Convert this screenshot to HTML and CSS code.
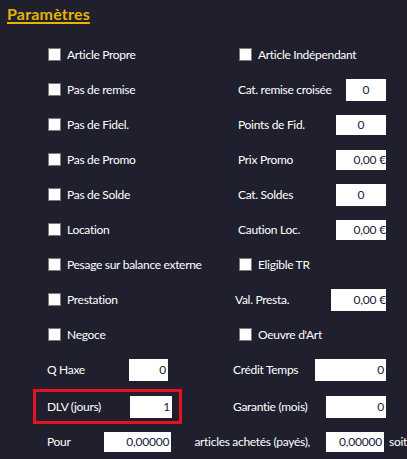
FILE: index.html
```html
<!DOCTYPE html>
<html lang="fr">
<head>
<meta charset="utf-8">
<title>Paramètres</title>
<link rel="stylesheet" href="styles.css">
</head>
<body>
<div class="page">
  <div class="header"><span class="title">Paramètres</span></div>

  <div class="row">
    <div class="cell left"><span class="cb"></span><span class="lbl">Article Propre</span></div>
    <div class="cell right"><span class="cb"></span><span class="lbl">Article Indépendant</span></div>
  </div>
  <div class="row">
    <div class="cell left"><span class="cb"></span><span class="lbl">Pas de remise</span></div>
    <div class="cell right"><span class="lbl">Cat. remise croisée</span><span class="field w40 center">0</span></div>
  </div>
  <div class="row">
    <div class="cell left"><span class="cb"></span><span class="lbl">Pas de Fidel.</span></div>
    <div class="cell right"><span class="lbl">Points de Fid.</span><span class="field w50 h20 center">0</span></div>
  </div>
  <div class="row">
    <div class="cell left"><span class="cb"></span><span class="lbl">Pas de Promo</span></div>
    <div class="cell right"><span class="lbl">Prix Promo</span><span class="field w50 h20 euro">0,00 €</span></div>
  </div>
  <div class="row">
    <div class="cell left"><span class="cb"></span><span class="lbl">Pas de Solde</span></div>
    <div class="cell right"><span class="lbl">Cat. Soldes</span><span class="field w50 center">0</span></div>
  </div>
  <div class="row">
    <div class="cell left"><span class="cb"></span><span class="lbl">Location</span></div>
    <div class="cell right"><span class="lbl">Caution Loc.</span><span class="field w50 h20 euro">0,00 €</span></div>
  </div>
  <div class="row">
    <div class="cell left"><span class="cb"></span><span class="lbl">Pesage sur balance externe</span></div>
    <div class="cell right"><span class="cb"></span><span class="lbl">Eligible TR</span></div>
  </div>
  <div class="row">
    <div class="cell left"><span class="cb"></span><span class="lbl">Prestation</span></div>
    <div class="cell right pad4"><span class="lbl">Val. Presta.</span><span class="field w55 euro">0,00 €</span></div>
  </div>
  <div class="row">
    <div class="cell left"><span class="cb"></span><span class="lbl">Negoce</span></div>
    <div class="cell right"><span class="cb"></span><span class="lbl">Oeuvre d'Art</span></div>
  </div>
  <div class="row">
    <div class="cell left plain"><span class="lbl fixed82">Q Haxe</span><span class="field w39">0</span></div>
    <div class="cell right pad2"><span class="lbl">Crédit Temps</span><span class="field w71">0</span></div>
  </div>
  <div class="row shifted">
    <div class="cell left boxed">
      <div class="highlight"><span class="lbl fixed83">DLV (jours)</span><span class="field w42">1</span></div>
    </div>
    <div class="cell right pad2"><span class="lbl">Garantie (mois)</span><span class="field w60">0</span></div>
  </div>
  <div class="row pour">
    <span class="lbl fixed58">Pour</span><span class="field w67 h20">0,00000</span>
    <span class="lbl articles">articles achetés (payés),</span><span class="field w58 h20">0,00000</span>
    <span class="lbl tail">soit</span>
  </div>
</div>
</body>
</html>
```
FILE: styles.css
```css
html, body {
  margin: 0;
  padding: 0;
  background: #1f1f2e;
  overflow: hidden;
}
.page {
  width: 407px;
  height: 459px;
  font-family: Lato, "Noto Sans", sans-serif;
  font-size: 12px;
  color: #ffffff;
  overflow: hidden;
}
.header {
  height: 37px;
  box-sizing: border-box;
  padding: 4px 0 0 7px;
}
.title {
  font-size: 16px;
  font-weight: bold;
  line-height: 20px;
  letter-spacing: 0.2px;
  color: #e8b400;
  text-decoration: underline;
  text-decoration-thickness: 2px;
  text-underline-offset: 2px;
}
.row {
  display: grid;
  grid-template-columns: 231px 155px;
  height: 35px;
}
.row.shifted {
  margin-top: 2px;
}
.cell {
  display: flex;
  align-items: center;
  gap: 6px;
}
.left {
  padding-left: 48px;
}
.left.plain {
  padding-left: 47px;
  gap: 0;
}
.left.boxed {
  padding-left: 33px;
}
.right {
  padding-left: 8px;
}
.right .lbl:first-child {
  margin-left: -1px;
}
.right.pad4 {
  padding-left: 5px;
}
.right.pad2 {
  padding-left: 3px;
}
.cb {
  width: 13px;
  height: 13px;
  box-sizing: border-box;
  background: #ffffff;
  border: 1px solid #7a7a7a;
  flex: none;
}
.lbl {
  white-space: nowrap;
  line-height: 14px;
  letter-spacing: -0.3px;
}
.field {
  margin-left: auto;
  height: 22px;
  box-sizing: border-box;
  background: #ffffff;
  color: #1a1a36;
  font-size: 12px;
  line-height: 22px;
  letter-spacing: -0.2px;
  text-align: right;
  padding-right: 2px;
  white-space: nowrap;
  overflow: hidden;
  flex: none;
}
.field.h20 {
  height: 20px;
  line-height: 20px;
}
.field.center {
  text-align: center;
  padding-right: 0;
}
.field.euro {
  padding-right: 0;
}
.w39 { width: 39px; }
.w40 { width: 40px; }
.w42 { width: 42px; }
.w50 { width: 50px; }
.w55 { width: 55px; }
.w58 { width: 58px; }
.w60 { width: 60px; }
.w67 { width: 67px; }
.w71 { width: 71px; }
.fixed82 { width: 82px; }
.fixed83 { width: 83px; }
.fixed58 { width: 58px; }
.plain .field, .highlight .field {
  margin-left: 0;
}
.highlight {
  width: 149px;
  height: 35px;
  box-sizing: border-box;
  border: 3px solid #e3141f;
  display: flex;
  align-items: center;
  padding-left: 11px;
}
.pour {
  display: flex;
  align-items: center;
  padding-left: 47px;
  white-space: nowrap;
}
.pour .field {
  margin-left: 0;
}
.articles {
  margin-left: 23px;
  width: 133px;
}
.tail {
  margin-left: 5px;
}
```
